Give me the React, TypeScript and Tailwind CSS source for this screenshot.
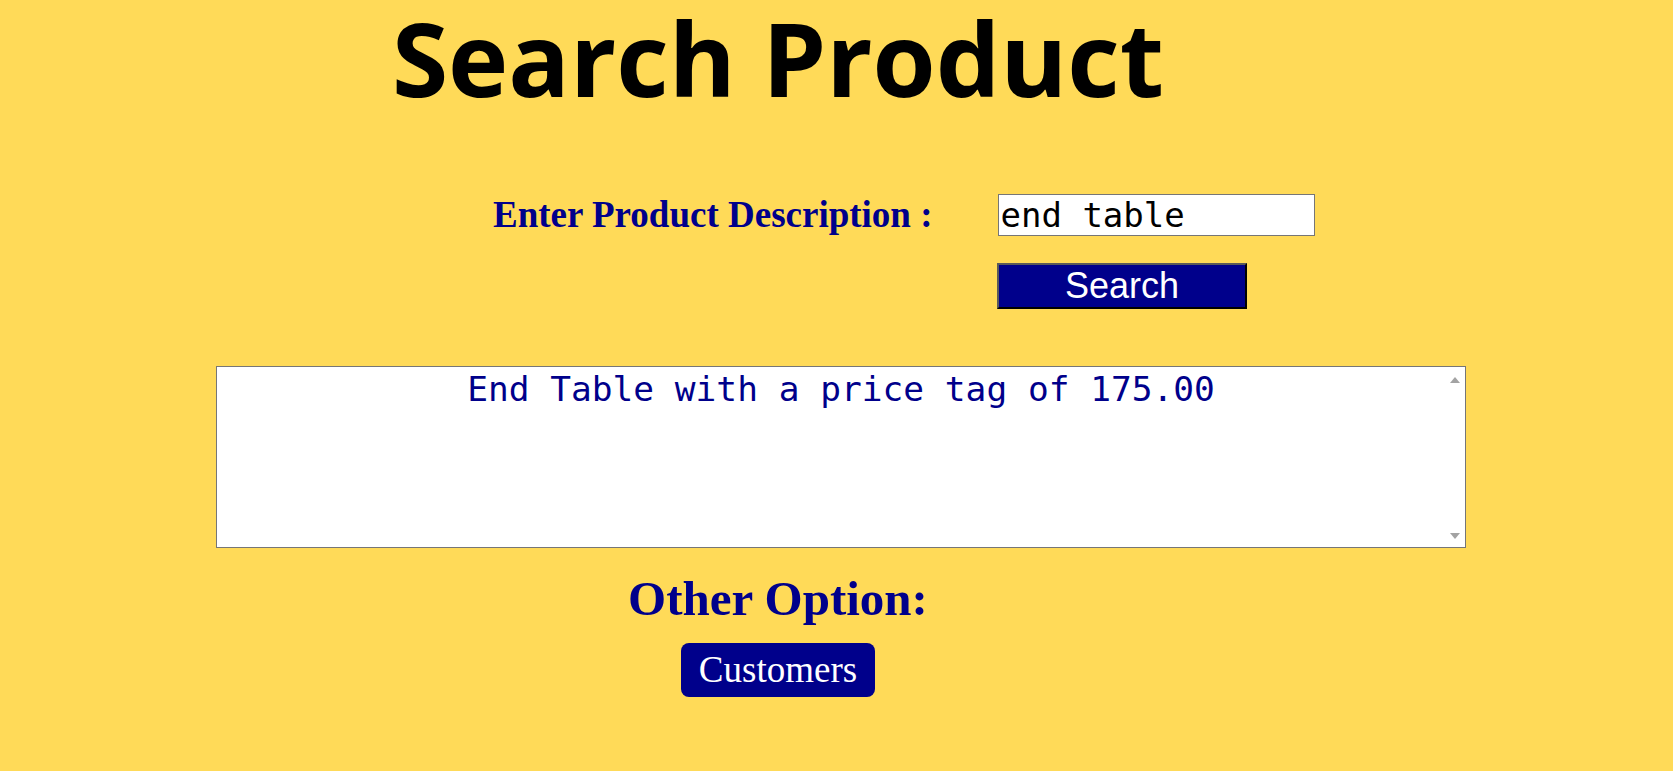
import { useState } from 'react'

const navy = 'text-[#00008b]'

function ScrollArrow({ down }: { down?: boolean }) {
  return (
    <svg width="10" height="6" viewBox="0 0 10 6" className="block">
      <path d={down ? 'M0 0 H10 L5 6 Z' : 'M0 6 H10 L5 0 Z'} fill="#a3a3a3" />
    </svg>
  )
}

export default function App() {
  const [query, setQuery] = useState('end table')
  const [result] = useState('End Table with a price tag of 175.00')

  return (
    <div className="min-h-screen w-full bg-[#ffda58] overflow-hidden">
      <div className="w-[1556px] text-center">
        <h1 className="text-[102px] leading-[116px] font-bold text-black font-['Open_Sans','Noto_Sans',sans-serif]">
          Search Product
        </h1>
      </div>

      {/* search form */}
      <div className="mt-[78px] flex items-center">
        <label
          htmlFor="desc"
          className={`ml-[493px] text-[37px] leading-[1.15] font-bold ${navy} font-['Liberation_Serif','Times_New_Roman',serif]`}
        >
          Enter Product Description :
        </label>
        <input
          id="desc"
          value={query}
          onChange={(e) => setQuery(e.target.value)}
          className="ml-[65px] w-[317px] h-[42px] border border-[#767676] bg-white px-[2px] py-[1px] text-[34px] leading-[1.15] text-black font-['DejaVu_Sans_Mono','Liberation_Mono',monospace] outline-none"
        />
      </div>
      <div className="mt-[26px] ml-[997px]">
        <button className="block w-[250px] h-[46px] border-2 border-t-[#5a5a5a] border-l-[#5a5a5a] border-b-black border-r-black bg-[#00008b] text-[36px] leading-[38px] text-white font-['Liberation_Sans',Arial,sans-serif]">
          Search
        </button>
      </div>

      {/* results */}
      <div className="relative mt-[57px] ml-[216px] w-[1250px] h-[182px]">
        <textarea
          readOnly
          value={result}
          className={`block w-full h-full resize-none overflow-y-scroll border border-[#767676] bg-white p-[2px] text-center text-[34.5px] leading-[1.164] ${navy} font-['DejaVu_Sans_Mono','Liberation_Mono',monospace] outline-none [&::-webkit-scrollbar]:w-[20px] [&::-webkit-scrollbar-track]:bg-[#fafafa]`}
        />
        <div className="absolute right-[6px] top-[11px]">
          <ScrollArrow />
        </div>
        <div className="absolute right-[6px] bottom-[9px]">
          <ScrollArrow down />
        </div>
      </div>

      <div className="w-[1556px] flex flex-col items-center">
        <h2 className={`mt-[23px] text-[49px] leading-[1.15] font-bold ${navy} font-['Liberation_Serif','Times_New_Roman',serif]`}>
          Other Option:
        </h2>
        <button className="mt-[16px] rounded-lg bg-[#00008b] px-[18px] py-[6px] text-[37px] leading-[1.15] text-white font-['Liberation_Serif','Times_New_Roman',serif]">
          Customers
        </button>
      </div>
    </div>
  )
}
